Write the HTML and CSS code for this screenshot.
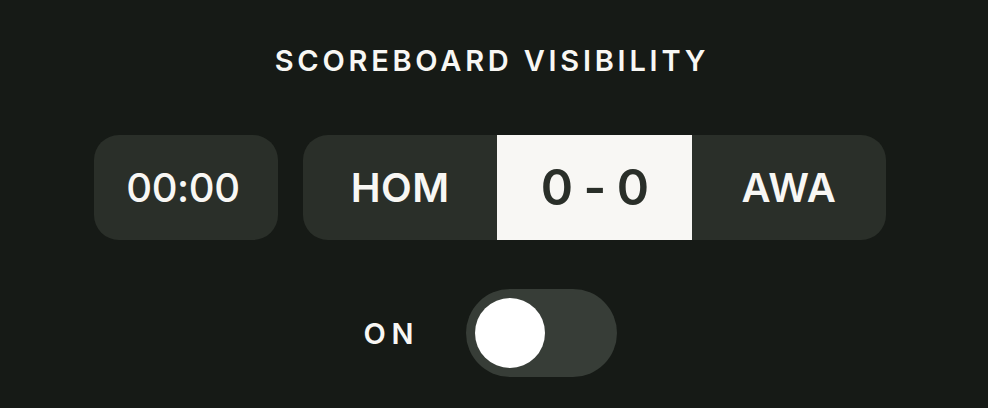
FILE: index.html
```html
<!DOCTYPE html>
<html lang="en">
<head>
<meta charset="utf-8">
<title>Scoreboard Visibility</title>
<link rel="stylesheet" href="styles.css">
</head>
<body>
<main class="screen">
  <h1 class="title">SCOREBOARD VISIBILITY</h1>
  <div class="board">
    <div class="timer">00:00</div>
    <div class="scorebar">
      <div class="team">HOM</div>
      <div class="score">0 - 0</div>
      <div class="team">AWA</div>
    </div>
  </div>
  <div class="toggle-row">
    <span class="toggle-label">ON</span>
    <div class="toggle"><span class="knob"></span></div>
  </div>
</main>
</body>
</html>
```
FILE: styles.css
```css
html, body {
  margin: 0;
  padding: 0;
  background: #161a16;
}
body {
  font-family: Inter, "Noto Sans", sans-serif;
  color: #f8f7f4;
}
.screen {
  width: 980px;
  height: 408px;
  display: flex;
  flex-direction: column;
  align-items: center;
  padding-top: 43px;
  box-sizing: border-box;
}
.title {
  margin: 0;
  font-size: 29px;
  line-height: 36px;
  font-weight: 600;
  letter-spacing: 0.13em;
  margin-right: -0.13em;
}
.board {
  display: flex;
  gap: 25px;
  margin-top: 56px;
  height: 105px;
}
.timer {
  width: 184px;
  border-radius: 25px;
  background: #2a2f29;
  display: flex;
  align-items: center;
  justify-content: center;
  padding-right: 6px;
  box-sizing: border-box;
  font-size: 40px;
  font-weight: 500;
  letter-spacing: -0.01em;
}
.scorebar {
  width: 583px;
  border-radius: 25px;
  background: #2a2f29;
  overflow: hidden;
  display: grid;
  grid-template-columns: 1fr 1fr 1fr;
}
.team, .score {
  display: flex;
  align-items: center;
  justify-content: center;
}
.team {
  font-size: 40px;
  font-weight: 600;
  letter-spacing: 0.01em;
}
.score {
  background: #f8f7f4;
  color: #2a2f29;
  font-size: 49px;
  font-weight: 600;
  letter-spacing: -0.02em;
}
.toggle-row {
  display: flex;
  align-items: center;
  gap: 52px;
  margin-top: 49px;
}
.toggle-label {
  font-size: 29px;
  font-weight: 600;
  letter-spacing: 0.2em;
  margin-right: -0.2em;
}
.toggle {
  width: 151px;
  height: 88px;
  border-radius: 44px;
  background: #373d37;
  box-sizing: border-box;
  padding: 9px;
  display: flex;
}
.knob {
  width: 70px;
  height: 70px;
  border-radius: 50%;
  background: #ffffff;
}
```
